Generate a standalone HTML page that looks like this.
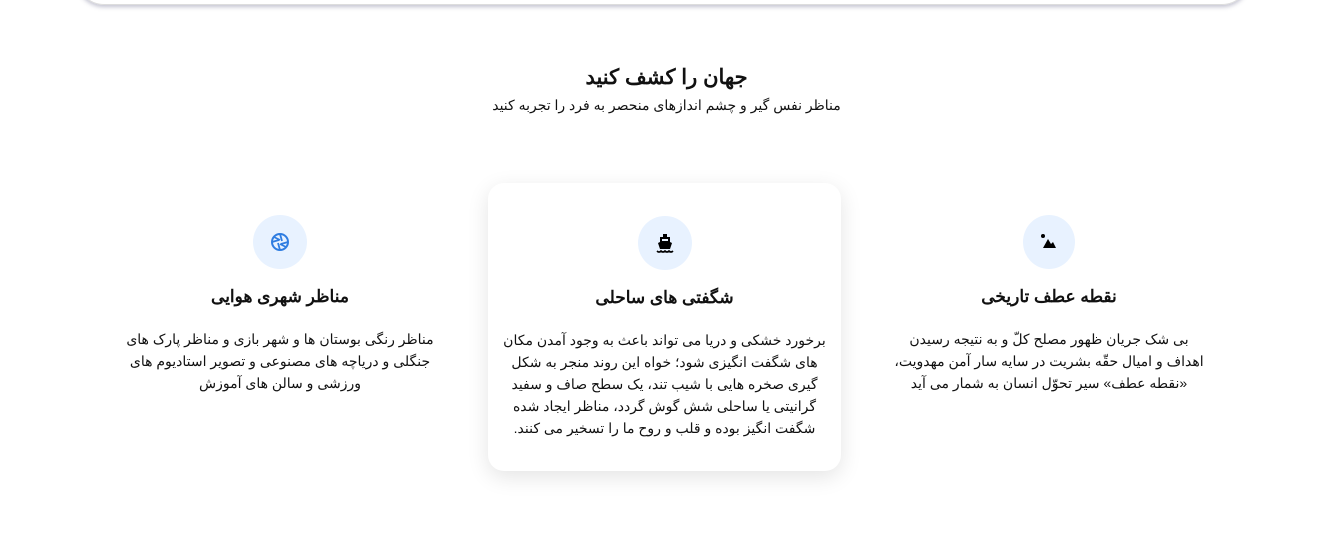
<!DOCTYPE html>
<html><head><meta charset="utf-8"><style>
body{margin:0;width:1333px;height:535px;background:#fff;overflow:hidden;position:relative;font-family:"Liberation Sans","Noto Sans CJK SC",sans-serif;color:#111;direction:rtl}
.top{position:absolute;left:76px;top:-40px;width:1172px;height:44px;border:1px solid #ddd;border-top:none;border-radius:0 0 28px 28px;box-shadow:0 2px 4px rgba(80,80,120,.35)}
h2{position:absolute;left:0;width:1333px;top:65px;margin:0;text-align:center;font-size:21px;font-weight:bold}
.sub{position:absolute;left:0;width:1333px;top:97px;text-align:center;font-size:14px}
.col{position:absolute;top:183px;height:288px;text-align:center;box-sizing:border-box}
.card{background:#fff;border-radius:16px;box-shadow:0 6px 22px rgba(0,0,0,.11)}
.ic{position:absolute;width:54px;height:54px;border-radius:50%;background:#e8f2ff;left:50%;margin-left:-27px;top:32px;display:flex;align-items:center;justify-content:center}
.t{position:absolute;left:0;right:0;top:104px;font-size:17px;font-weight:bold}
.p{position:absolute;left:-20px;right:-20px;top:145px;font-size:14px;line-height:22px;white-space:nowrap}
</style></head><body>
<div class="top"></div>
<h2>جهان را کشف کنید</h2>
<div class="sub">مناظر نفس گیر و چشم اندازهای منحصر به فرد را تجربه کنید</div>

<div class="col" style="left:102px;width:356px">
<div class="ic"><svg width="20" height="20" viewBox="0 0 20 20"><circle cx="10" cy="10" r="8" fill="none" stroke="#2f7de1" stroke-width="2"/><path d="M10 2 L12 9 M18 10 L11 12 M10 18 L8 11 M2 10 L9 8 M4 5 L10 8 M16 15 L10 12" stroke="#2f7de1" stroke-width="1.8" fill="none"/></svg></div>
<div class="t">مناظر شهری هوایی</div>
<div class="p">مناظر رنگی بوستان ها و شهر بازی و مناظر پارک های<br>جنگلی و دریاچه های مصنوعی و تصویر استادیوم های<br>ورزشی و سالن های آموزش</div>
</div>

<div class="col card" style="left:488px;width:353px">
<div class="ic" style="top:33px"><svg width="22" height="22" viewBox="0 0 22 22"><rect x="9" y="2" width="4" height="3" fill="#000"/><path d="M6 5h10v5l2 1-2 6H6l-2-6 2-1z" fill="#000"/><rect x="8" y="7" width="6" height="2" fill="#e8f2ff"/><path d="M3 19q2 2 4 0 2 2 4 0 2 2 4 0 2 2 4 0" stroke="#000" stroke-width="1.6" fill="none"/></svg></div>
<div class="t" style="top:105px">شگفتی های ساحلی</div>
<div class="p" style="top:146px">برخورد خشکی و دریا می تواند باعث به وجود آمدن مکان<br>های شگفت انگیزی شود؛ خواه این روند منجر به شکل<br>گیری صخره هایی با شیب تند، یک سطح صاف و سفید<br>گرانیتی یا ساحلی شش گوش گردد، مناظر ایجاد شده<br>شگفت انگیز بوده و قلب و روح ما را تسخیر می کنند.</div>
</div>

<div class="col" style="left:872px;width:354px">
<div class="ic" style="width:52px;margin-left:-26px"><svg width="22" height="22" viewBox="0 0 22 22"><circle cx="5" cy="5" r="2" fill="#000"/><path d="M5 17l5-9 3 5 2-2 3 6z" fill="#000"/></svg></div>
<div class="t">نقطه عطف تاریخی</div>
<div class="p">بی شک جریان ظهور مصلح کلّ و به نتیجه رسیدن<br>اهداف و امیال حقّه بشریت در سایه سار آمن مهدویت،<br>«نقطه عطف» سیر تحوّل انسان به شمار می آید</div>
</div>
</body></html>
